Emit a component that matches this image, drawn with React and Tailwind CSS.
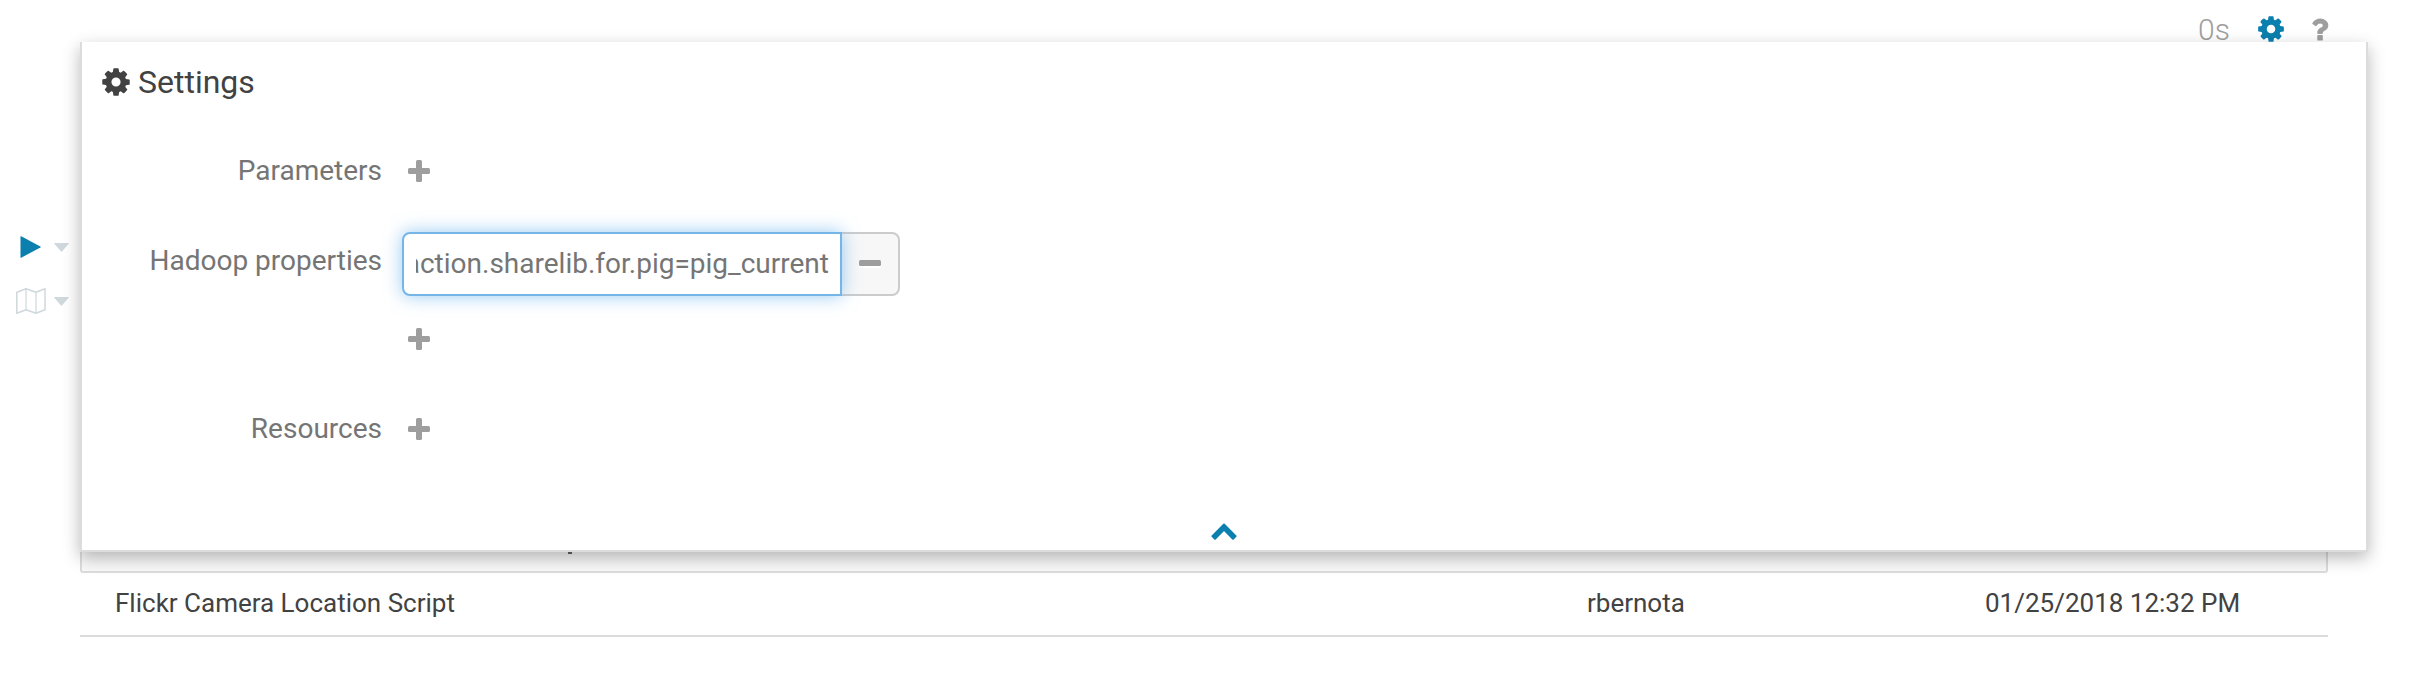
const GEAR =
  "M1152 896q0-106-75-181t-181-75-181 75-75 181 75 181 181 75 181-75 75-181zm512-109v222q0 12-8 23t-20 13l-185 28q-19 54-39 91 35 50 107 138 10 12 10 25t-9 23q-27 37-99 108t-94 71q-12 0-26-9l-138-108q-44 23-91 38-16 136-29 186-7 28-36 28h-222q-14 0-24.5-8.5t-11.5-21.5l-28-184q-49-16-90-37l-141 107q-10 9-25 9-14 0-25-11-126-114-165-168-7-10-7-23 0-12 8-23 15-21 51-66.5t54-70.5q-27-50-41-99l-183-27q-13-2-21-12.5t-8-23.5v-222q0-12 8-23t19-13l186-28q14-46 39-92-40-57-107-138-10-12-10-24 0-10 9-23 26-36 98.5-107.5t94.5-71.5q13 0 26 10l138 107q44-23 91-38 16-136 29-186 7-28 36-28h222q14 0 24.5 8.5t11.5 21.5l28 184q49 16 90 37l142-107q9-9 24-9 13 0 25 10 129 119 165 170 7 8 7 22 0 12-8 23-15 21-51 66.5t-54 70.5q26 50 41 98l183 28q13 2 21 12.5t8 23.5z";
const QUESTION =
  "M1088 1256v240q0 16-12 28t-28 12h-240q-16 0-28-12t-12-28v-240q0-16 12-28t28-12h240q16 0 28 12t12 28zm316-600q0 54-15.5 101t-35 76.5-55 59.5-57.5 43.5-61 35.5q-41 23-68.5 65t-27.5 67q0 17-12 32.5t-28 15.5h-240q-15 0-25.5-18.5t-10.5-37.5v-45q0-83 65-156.500t143-108.500q59-27 84-56t25-76q0-42-46.500-74t-107.500-32q-65 0-108 29-35 25-107 115-13 16-31 16-12 0-25-8l-164-125q-13-10-15.500-25t5.500-28q160-266 464-266 80 0 161 31t146 83 106 127.500 41 158.500z";
const CHEVRON_UP =
  "M1683 1331l-166 165q-19 19-45 19t-45-19l-531-531-531 531q-19 19-45 19t-45-19l-166-165q-19-19-19-45.500t19-45.500l742-741q19-19 45-19t45 19l742 741q19 19 19 45.500t-19 45.500z";

function Glyph({ d, className }) {
  return (
    <svg viewBox="0 0 1792 1792" className={className} fill="currentColor" aria-hidden="true">
      <path d={d} />
    </svg>
  );
}

function Plus() {
  return (
    <button type="button" className="block h-[22px] w-[22px] text-[#9e9e9e]">
      <svg viewBox="0 0 22 22" className="block h-[22px] w-[22px]" fill="currentColor">
        <rect x="8" y="0" width="6" height="22" rx="1.5" />
        <rect x="0" y="8" width="22" height="6" rx="1.5" />
      </svg>
    </button>
  );
}

function Caret() {
  return (
    <svg viewBox="0 0 15 9" className="h-[9px] w-[15px]" fill="#cfd8dc">
      <path d="M0 0.500Q0 0 0.500 0H14.500Q15 0 14.700 0.800L8.200 8.300Q7.500 9 6.800 8.300L0.300 0.800Z" />
    </svg>
  );
}

function Toolbar() {
  return (
    <header className="flex h-[42px] items-start pl-[2198px] pt-[12px]">
      <span className="w-[58px] text-[30px] leading-[36px] font-light text-[#9e9e9e]">0s</span>
      <Glyph d={GEAR} className="mt-[2px] h-[30px] w-[30px] text-[#0b7fad]" />
      <Glyph d={QUESTION} className="ml-[18px] mt-[2px] h-[31px] w-[31px] text-[#9e9e9e]" />
    </header>
  );
}

function ActionRail() {
  return (
    <nav className="flex w-[80px] flex-col pt-[194px]">
      <div className="flex h-[22px] items-center pl-[20px]">
        <svg viewBox="0 0 21 22" className="h-[22px] w-[21px]" fill="#0b7fad">
          <path d="M0.500 0.600Q0.500 0 1.200 0.300L20.400 10.500Q21 11 20.400 11.500L1.200 21.700Q0.500 22 0.500 21.400Z" />
        </svg>
        <span className="ml-[13px] flex">
          <Caret />
        </span>
      </div>
      <div className="mt-[29px] flex h-[28px] items-center pl-[16px]">
        <svg viewBox="0 0 30 28" className="h-[28px] w-[30px]" fill="none" stroke="#cfd8dc" strokeWidth="1.500" strokeLinejoin="round">
          <path d="M0.800 5.200L10 1.700L20 5.200L29 1.700V22.800L20 26.300L10 22.800L0.800 26.300Z" />
          <path d="M10 1.700V22.800M20 5.200V26.300" strokeWidth="1.200" />
        </svg>
        <span className="ml-[8px] flex">
          <Caret />
        </span>
      </div>
    </nav>
  );
}

function ResultsTable() {
  return (
    <main className="w-[2248px] pt-[458px]">
      <div className="h-[73px] rounded-[3px] border-2 border-[#dcdcdc] bg-[#f9f9f9] pl-[486px] pt-[50px]">
        <div className="h-[2px] w-[4px] bg-[#616161]" />
      </div>
      <div className="flex h-[64px] items-center border-b-2 border-[#dcdcdc] pb-[2px] text-[26px] leading-[40px] text-[#424242]">
        <span className="w-[1507px] pl-[35px]">Flickr Camera Location Script</span>
        <span className="w-[398px]">rbernota</span>
        <span>01/25/2018 12:32 PM</span>
      </div>
    </main>
  );
}

function FieldRow({ label, children }) {
  return (
    <div className="flex">
      <label className="w-[300px] text-right text-[28px] leading-[40px] text-[#757575]">{label}</label>
      <div className="pl-[20px]">{children}</div>
    </div>
  );
}

function SettingsPanel() {
  return (
    <section className="absolute left-[80px] top-[42px] flex h-[510px] w-[2288px] flex-col border-x-2 border-b-2 border-[#dcdcdc] bg-white shadow-[0_6px_16px_rgba(0,0,0,0.28)]">
      <h2 className="flex h-[80px] items-center pl-[18px] text-[32px] leading-[40px] text-[#424242]">
        <Glyph d={GEAR} className="h-[32px] w-[32px]" />
        <span className="ml-[6px]">Settings</span>
      </h2>
      <div className="pt-[29px]">
        <FieldRow label="Parameters">
          <div className="pl-[6px] pt-[9px]">
            <Plus />
          </div>
        </FieldRow>
      </div>
      <div className="pt-[50px]">
        <FieldRow label="Hadoop properties">
          <div className="-mt-[9px] flex h-[64px]">
            <div className="relative z-10 flex w-[440px] items-center rounded-l-[8px] border-2 border-[#76b5e8] bg-white pl-[12px] pr-[11px] shadow-[0_0_18px_rgba(82,168,236,0.6)]">
              <div className="flex w-full justify-end overflow-hidden whitespace-nowrap text-[28px] leading-[40px] text-[#757575]">
                <span>action.sharelib.for.pig=pig_current</span>
              </div>
            </div>
            <button type="button" className="flex w-[58px] items-center justify-center rounded-r-[8px] border-y-2 border-r-2 border-[#cccccc] bg-[#f7f7f7] pb-[2px]">
              <span className="block h-[6px] w-[22px] rounded-[1.5px] bg-[#9e9e9e] shadow-[0_2px_0_white]" />
            </button>
          </div>
          <div className="pl-[6px] pt-[32px]">
            <Plus />
          </div>
        </FieldRow>
      </div>
      <div className="pt-[59px]">
        <FieldRow label="Resources">
          <div className="pl-[6px] pt-[9px]">
            <Plus />
          </div>
        </FieldRow>
      </div>
      <button type="button" className="mt-auto mb-[6px] flex justify-center text-[#0b7fad]">
        <Glyph d={CHEVRON_UP} className="h-[28px] w-[28px]" />
      </button>
    </section>
  );
}

export default function App() {
  return (
    <div className="relative h-[676px] w-[2428px] overflow-hidden bg-white font-['Roboto',sans-serif]">
      <Toolbar />
      <div className="flex">
        <ActionRail />
        <ResultsTable />
      </div>
      <SettingsPanel />
    </div>
  );
}
